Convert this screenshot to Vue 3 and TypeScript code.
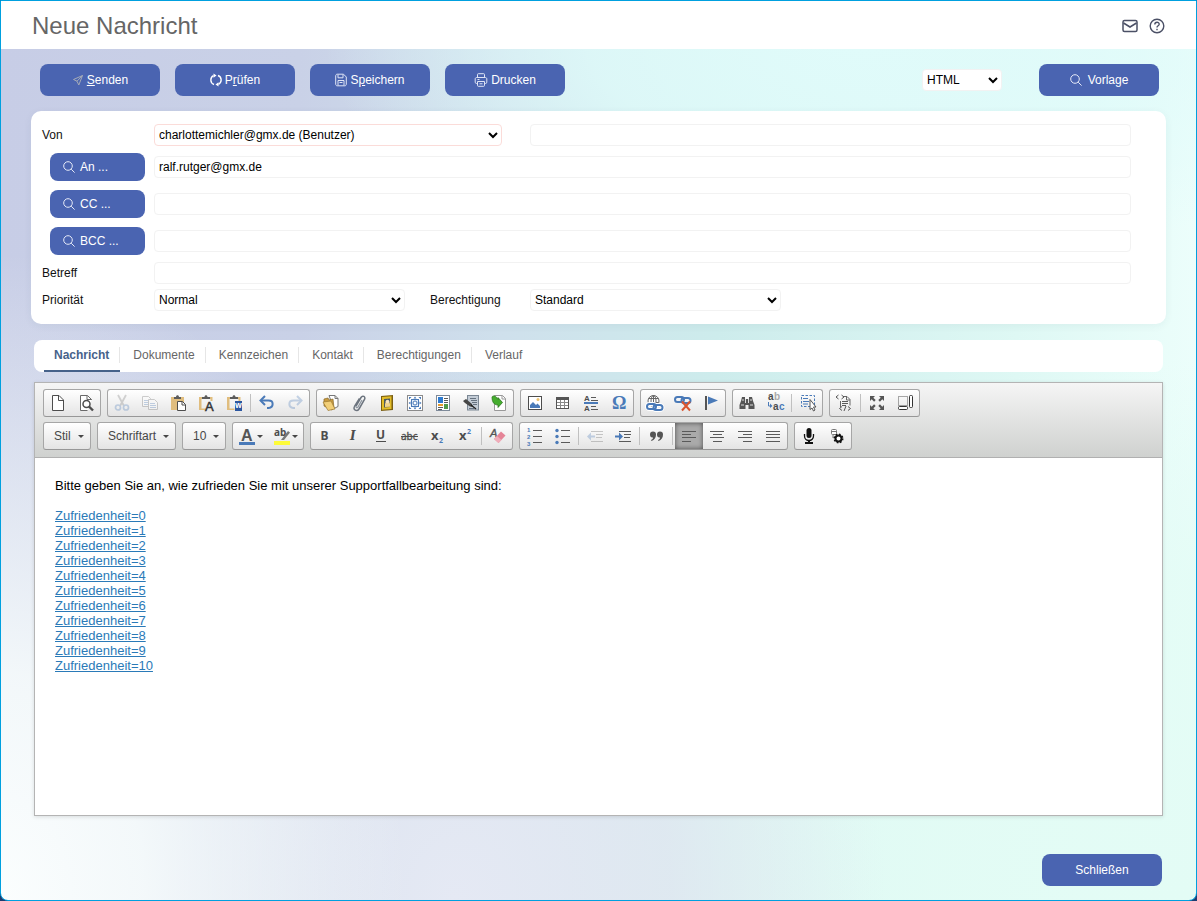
<script setup lang="ts">
import { ref } from 'vue'

interface Tool {
  name: string
  art: string
  off?: boolean
  on?: boolean
}
type Item = Tool | '|'

const g = '#4d4d4d'
const b = '#4a7ab8'
const lines = (rows: number[][], color = '#5a5a5a') =>
  rows.map(([x, y, w]) => `<rect x="${x}" y="${y}" width="${w}" height="1" fill="${color}"/>`).join('')
const letter = (t: string, x: number, y: number, size: number, color = g, extra = '') =>
  `<text x="${x}" y="${y}" font-size="${size}" fill="${color}" font-family="'Noto Sans','Open Sans',sans-serif" font-weight="700" ${extra}>${t}</text>`
const small = (t: string, x: number, y: number, size: number, color = g) =>
  `<text x="${x}" y="${y}" font-size="${size}" fill="${color}" font-family="'Liberation Sans',Arial,sans-serif" font-weight="700">${t}</text>`
const board = `<path d="M1 2h2.500v11.500h5v1.500h-7.500zM12.500 2h2v4h-2z" fill="#e0bd7e"/><path d="M1 2h13v2h-13z" fill="#e0bd7e"/><path d="M4 4v-2h2.500c0-2.500 3-2.500 3 0h2.500v2z" fill="#5c5c5c"/>`
const page = `<path d="M2.500.5h6.500l4.500 4.500v10.500h-11z" fill="#fff" stroke="${g}"/><path d="M8.500.5v5h5" fill="none" stroke="${g}"/>`
const chain = (c: string, y: number, w = 2) =>
  `<rect x="0" y="${y}" width="9" height="5" rx="2.500" fill="none" stroke="${c}" stroke-width="${w}"/><rect x="6.500" y="${y + 1}" width="9" height="5" rx="2.500" fill="none" stroke="${c}" stroke-width="${w}"/>`

const rowOne: Item[][] = [
  [
    { name: 'Neue Seite', art: page },
    { name: 'Vorschau', art: `<path d="M13.500 5v-.5l-4-4h-7v15h7" fill="#fff" stroke="#6a6a6a"/><path d="M9 .5v4h4.500" fill="none" stroke="#6a6a6a"/><circle cx="8.500" cy="9" r="3.500" fill="#fff" stroke="${g}" stroke-width="1.500"/><path d="M11 11.500l4 4" stroke="${g}" stroke-width="2.400"/>` },
  ],
  [
    { name: 'Ausschneiden', off: true, art: `<path d="M4 0l6 11M12 0l-6 11" stroke="#777" stroke-width="1.800"/><circle cx="4" cy="12.500" r="2.500" fill="none" stroke="${b}" stroke-width="1.700"/><circle cx="12" cy="12.500" r="2.500" fill="none" stroke="${b}" stroke-width="1.700"/>` },
    { name: 'Kopieren', off: true, art: `<path d="M.5 1.500h6l2 2v8h-8z" fill="#fff" stroke="#666"/>${lines([[2, 5, 5], [2, 7, 5], [2, 9, 4]], b)}<path d="M6.500 4.500h6l3 3v7h-9z" fill="#fff" stroke="#666"/>${lines([[8, 8, 5], [8, 10, 6], [8, 12, 6]], b)}` },
    { name: 'Einfügen', art: `<path d="M1 2h13v13h-13z" fill="#e0bd7e"/><path d="M4 4v-2h2c0-2.500 3-2.500 3 0h2v2z" fill="#5c5c5c"/><path d="M7.500 6.500h5l3 3v6h-8z" fill="#fff" stroke="${g}"/><path d="M12 6.500v3.500h3.500" fill="none" stroke="${g}"/>` },
    { name: 'Als Text einfügen', art: `${board}<text x="7" y="16" font-size="13" fill="#333" font-family="'Liberation Sans',sans-serif" stroke="#333" stroke-width=".5">A</text>` },
    { name: 'Aus Word einfügen', art: `${board}<rect x="9" y="6" width="7" height="10" fill="#2c57a0"/>${letter('w', 9, 13, 8, '#fff')}` },
    '|',
    { name: 'Rückgängig', art: `<path d="M2 5.500h7.500c5.500 0 5.500 6.500 0 7.500h-1.500" fill="none" stroke="${b}" stroke-width="2"/><path d="M6 1l-4.500 4.500 4.500 4.500" fill="none" stroke="${b}" stroke-width="2"/>` },
    { name: 'Wiederherstellen', off: true, art: `<path d="M14 5.500h-7.500c-5.500 0-5.500 6.500 0 7.500h1.500" fill="none" stroke="${b}" stroke-width="2"/><path d="M10 1l4.500 4.500-4.500 4.500" fill="none" stroke="${b}" stroke-width="2"/>` },
  ],
  [
    { name: 'Ordner', art: `<path d="M6 .5h6l3 3v8l-4 2z" fill="#fff" stroke="#777"/><path d="M12 .5v3h3" fill="none" stroke="#777"/><path d="M1 4l4-1 1 2 4-1 1 9-2 2-8-4z" fill="#c99b3f" stroke="#8a6a2a" stroke-width=".7"/><path d="M0 7l8-1 4 8-7 1.500z" fill="#f2cf78" stroke="#9c7a32" stroke-width=".7"/>` },
    { name: 'Anhang', art: `<path d="M5 11l5-8.500c1.500-2.500 5-1 3.500 2l-5.500 9.500c-2 3-6.500 1-4.500-2.500l5-8" fill="none" stroke="#6c747e" stroke-width="1.500"/><path d="M5 11c-.5 2 1.500 2 2 1l4-7" fill="none" stroke="#8d96a0" stroke-width="1.300"/>` },
    { name: 'Bild', art: `<path d="M2 1l12-1v15l-12 1z" fill="#7b5f12"/><path d="M3 2l9.500-.7v12.700l-9.500.8z" fill="#e3bd28"/><path d="M5 4l6-.4v8.400l-6 .5z" fill="#4d5a60"/><path d="M6 12v-3l1-3h3l1 3v2.700z" fill="#f1d48c"/><circle cx="8.500" cy="6.500" r="1.800" fill="#f5e3bd"/>` },
    { name: 'Rahmen', art: `<rect x=".5" y=".5" width="15" height="15" fill="#fff" stroke="#8b8b8b"/><rect x="4.500" y="4.500" width="7" height="7" fill="#dfeaf7" stroke="${b}"/><path d="M8 1.500l1.500 2h-3zM8 14.500l1.500-2h-3zM1.500 8l2-1.500v3zM14.500 8l-2-1.500v3zM2 2h2.500l-2.500 2.500zM14 2h-2.500l2.500 2.500zM2 14h2.500l-2.500-2.500zM14 14h-2.500l2.500-2.500z" fill="${b}"/><circle cx="8" cy="8" r="2" fill="#fff" stroke="${b}"/>` },
    { name: 'Vorlage einfügen', art: `<rect x="1.500" y=".5" width="13" height="15" fill="#fff" stroke="#7e8a99"/><rect x="3" y="2" width="5" height="6" fill="#2e7bd0"/><rect x="3" y="9" width="5" height="2" fill="#e49b2d"/><rect x="9" y="9" width="4" height="5" fill="#4f9a49"/>${lines([[9, 3, 4], [9, 5, 4], [9, 7, 4], [3, 12, 5], [3, 14, 4]])}` },
    { name: 'Signatur', art: `<rect x="4.500" y=".5" width="11" height="14.500" fill="#c3ccd6" stroke="#7b8794"/>${lines([[7, 3, 6], [8, 5, 6], [9, 7, 5], [10, 9, 4], [6, 13, 5]], '#66727f')}<path d="M0 6l3-2 6 5 1 3-3-.5-5-3.500z" fill="#464646"/><path d="M8 10l5 4" stroke="#222" stroke-width="1.500"/>` },
    { name: 'Importieren', art: `<path d="M3.500.5h8l3 3v12h-11z" fill="#fff" stroke="#999"/><path d="M11 .5v3.500h3.500" fill="none" stroke="#999"/><path d="M1 2c1-2 4-1 5 1l1 1.500v-2l4.500 5-4.500 5v-2.500c-4 0-6-3-6-8z" fill="#45ad2e" stroke="#236c16" stroke-width=".7"/>` },
  ],
  [
    { name: 'Grafik', art: `<rect x="1.500" y="1.500" width="13" height="13" fill="#fff" stroke="${g}"/><path d="M3 13v-3l3-3 3 3 1.500-1.500 2.500 2.500v2z" fill="${b}"/><circle cx="11" cy="4.500" r="1.500" fill="#ecc26e"/>` },
    { name: 'Tabelle', art: `<rect x="1.500" y="2.500" width="12" height="11" fill="#fff" stroke="#555"/><rect x="1" y="2" width="13" height="3" fill="#555"/><path d="M2 7.500h11M2 10.500h11M5.500 5v8M9.500 5v8" stroke="#888" fill="none"/>` },
    { name: 'Trennlinie', art: `${small('A', 1, 6, 8)}${small('A', 1, 16, 8)}<rect x="1" y="7" width="14" height="2" fill="${b}"/>${lines([[8, 2, 5], [8, 5, 7], [8, 11, 5], [8, 14, 7]])}` },
    { name: 'Sonderzeichen', art: `<text x="1" y="14" font-size="18" font-weight="700" fill="${b}" font-family="'Liberation Serif',serif">Ω</text>` },
  ],
  [
    { name: 'Link', art: `<circle cx="6.500" cy="6" r="5.500" fill="#fff" stroke="#666"/><ellipse cx="6.500" cy="6" rx="2.500" ry="5.500" fill="none" stroke="#666"/><path d="M1.500 3.500h10M1.500 7.500h10M6.500 1v8" stroke="#666" fill="none"/>${chain('#fff', 9, 4)}${chain(b, 9)}` },
    { name: 'Link entfernen', art: `${chain(b, 2)}<path d="M7 6.500l8 9M15 6.500l-8 9" stroke="#d9552f" stroke-width="2"/>` },
    { name: 'Anker', art: `<rect x="2" y="1" width="2" height="14" fill="#555"/><path d="M5 1.500l10 4-10 4z" fill="${b}"/>` },
  ],
  [
    { name: 'Suchen', art: `<path d="M3 2h3v2h4v-2h3l1 4 1.500 4v4h-6v-4h-3v4h-6v-4l1.500-4z" fill="#555"/><path d="M6.500 4v4M9.500 4v4M2 10h3M11 10h3M3 5h2M11 5h2" stroke="#ddd"/>` },
    { name: 'Ersetzen', art: `${small('a', 1, 5, 10)}${small('b', 7, 5, 10, '#aaa')}${small('a', 6, 15, 10)}${small('c', 12, 15, 10, b)}<path d="M1.500 7v4h2" fill="none" stroke="${b}"/><path d="M3 8.500l2.500 2.500-2.500 2z" fill="${b}"/>` },
    '|',
    { name: 'Alles auswählen', art: `<path d="M1.500.5h13v11h-13z" fill="none" stroke="${b}" stroke-dasharray="2.500 1.500"/><path d="M3 3.500h5M3 6.500h6M3 9h5" stroke="${b}"/><path d="M10 4.500v10l2-1.500 1.500 3 1.500-1-1.500-3h2.500z" fill="#fff" stroke="#555"/>` },
  ],
  [
    { name: 'Quellcode', art: `<path d="M7 1.500h4l3 3v6M4.500 6v6" fill="none" stroke="#666"/><path d="M10.500 1.500v3.500h3.500" fill="none" stroke="#666"/>${lines([[6, 6, 6], [6, 8, 6], [6, 10, 4]])}<path d="M2.500 0l-2.500 2 2.500 2M5.500 0l2.500 2-2.500 2M6 11.500l-2.500 2 2.500 2M12 11.500l2.500 2-2.500 2M10 11l-2 5" fill="none" stroke="#555"/>` },
    '|',
    { name: 'Maximieren', art: `<path d="M1 1h5l-1.700 1.700 2.400 2.400-1.600 1.600-2.400-2.400-1.700 1.700zM15 1v5l-1.700-1.700-2.400 2.400-1.600-1.600 2.400-2.400-1.700-1.700zM1 15v-5l1.700 1.700 2.400-2.400 1.600 1.600-2.400 2.400 1.700 1.700zM15 15h-5l1.700-1.700-2.400-2.400 1.600-1.600 2.400 2.400 1.700-1.700z" fill="#555"/>` },
    { name: 'Blöcke anzeigen', art: `<rect x="1.500" y="1.500" width="9" height="9" fill="none" stroke="#555" stroke-dasharray="1 1"/><rect x="12.500" y=".5" width="3" height="12" rx="1" fill="#fff" stroke="#333"/><rect x="1.500" y="11.500" width="9" height="3" rx="1" fill="#fff" stroke="#333"/>` },
  ],
]

const lists = lines([[7, 2, 9], [7, 8, 9], [7, 14, 9]])
const inkText: Item[] = [
  { name: 'Fett', art: letter('B', 3.5, 12, 12) },
  { name: 'Kursiv', art: `<text x="5" y="12" font-size="12" font-weight="700" font-style="italic" fill="${g}" font-family="'DejaVu Serif',serif">I</text>` },
  { name: 'Unterstrichen', art: `${letter('U', 3, 11, 12)}<rect x="3" y="13" width="10" height="1" fill="${g}"/>` },
  { name: 'Durchgestrichen', art: `<text x="0" y="12" font-size="10" fill="${g}" stroke="${g}" stroke-width=".3" font-family="'Noto Sans',sans-serif">abc</text><rect x="0" y="8" width="17" height="1" fill="${g}"/>` },
  { name: 'Tiefgestellt', art: `${letter('x', 2, 12, 13)}${letter('2', 10, 15, 7, b)}` },
  { name: 'Hochgestellt', art: `${letter('x', 2, 12, 13)}${letter('2', 10, 6, 7, b)}` },
  '|',
  { name: 'Formatierung entfernen', art: `<text x="0" y="9" font-size="11" font-style="italic" fill="#555" stroke="#555" stroke-width=".4" font-family="'Liberation Sans',sans-serif">A</text><path d="M4 11l7-7.500 4.500 4-7 7.500z" fill="#e58497"/><path d="M4 11l3-3 4.500 4-3 3z" fill="#f0adba"/>` },
]
const paragraph: Item[] = [
  { name: 'Nummerierung', art: `${small('1', 1, 4, 6, b)}${small('2', 1, 11, 6, b)}${small('3', 1, 18, 6, b)}${lists}` },
  { name: 'Aufzählung', art: `<circle cx="3" cy="2.500" r="1.700" fill="${b}"/><circle cx="3" cy="8.500" r="1.700" fill="${b}"/><circle cx="3" cy="14.500" r="1.700" fill="${b}"/>${lists}` },
  '|',
  { name: 'Einzug verkleinern', off: true, art: `<path d="M0 8.500l4-4v3h4v2h-4v3z" fill="${b}"/>${lines([[4, 3, 12], [9, 6, 7], [9, 9, 6], [4, 13, 12]])}` },
  { name: 'Einzug vergrößern', art: `<path d="M8 8.500l-4-4v3h-4v2h4v3z" fill="${b}"/>${lines([[4, 3, 12], [9, 6, 7], [9, 9, 6], [4, 13, 12]])}` },
  '|',
  { name: 'Zitatblock', art: `<path d="M2 6.500a3 3 0 0 1 6 0c0 3-1.500 5.500-4.500 6.500l-.5-1c1.500-.6 2-1.500 2-2.500-2 .4-3-1-3-3zM9 6.500a3 3 0 0 1 6 0c0 3-1.500 5.500-4.500 6.500l-.5-1c1.500-.6 2-1.500 2-2.500-2 .4-3-1-3-3z" fill="#555"/>` },
  '|',
  { name: 'Linksbündig', on: true, art: lines([[1, 3, 14], [1, 6, 9], [1, 9, 14], [1, 13, 9]]) },
  { name: 'Zentriert', art: lines([[1, 3, 14], [4, 6, 9], [1, 9, 14], [4, 13, 9]]) },
  { name: 'Rechtsbündig', art: lines([[1, 3, 14], [6, 6, 9], [1, 9, 14], [6, 13, 9]]) },
  { name: 'Blocksatz', art: lines([[1, 3, 14], [1, 6, 14], [1, 9, 14], [1, 13, 14]]) },
]
const extras: Item[] = [
  { name: 'Diktieren', art: `<rect x="5.500" y="0" width="5" height="10" rx="2.500" fill="#111"/><path d="M3.500 6v2a4.500 4.500 0 0 0 9 0v-2" fill="none" stroke="#111" stroke-width="1.300"/><path d="M7 12h2v2h3v2h-8v-2h3z" fill="#111"/>` },
  { name: 'Optionen', art: `<rect x="2.500" y="1.500" width="5" height="5" rx="1" fill="#fff" stroke="#777"/><path d="M3 3.500h4M4 7v3" stroke="#777"/><circle cx="9.500" cy="10.500" r="3" fill="#fff" stroke="#111" stroke-width="2"/><circle cx="9.500" cy="10.500" r="4.300" fill="none" stroke="#111" stroke-width="1.400" stroke-dasharray="1.700 1.677"/>` },
]
const combos = [
  { label: 'Stil', cls: 'w-stil' },
  { label: 'Schriftart', cls: 'w-font' },
  { label: '10', cls: 'w-size' },
]
const colors: Tool[] = [
  { name: 'Textfarbe', art: `<text x="2" y="13" font-size="16" font-weight="700" fill="#555" font-family="'Liberation Sans',sans-serif">A</text><rect x="0" y="14" width="16" height="3" fill="${b}"/>` },
  { name: 'Hintergrundfarbe', art: `${letter('ab', 0, 8, 10)}<path d="M7 12l7-9 2 1.500-6 7.500z" fill="#777"/><rect x="0" y="13" width="16" height="4" fill="#fdfb3a"/>` },
]

const tabs = ['Nachricht', 'Dokumente', 'Kennzeichen', 'Kontakt', 'Berechtigungen', 'Verlauf']
const active = ref('Nachricht')
const to = ref('ralf.rutger@gmx.de')
const recipients = [
  { id: 'to', label: 'An ...' },
  { id: 'cc', label: 'CC ...' },
  { id: 'bcc', label: 'BCC ...' },
]
const scores = Array.from({ length: 11 }, (_, i) => i)
</script>

<template>
  <div class="window">
    <header class="head">
      <h1>Neue Nachricht</h1>
      <button class="ghost" aria-label="E-Mail">
        <svg width="16" height="16" viewBox="0 0 16 16" fill="none" stroke="#4b5066" stroke-width="1.500"><rect x="1" y="2.500" width="14" height="11" rx="1.500" /><path d="M1.500 5l6.500 4 6.500-4" /></svg>
      </button>
      <button class="ghost" aria-label="Hilfe">
        <svg width="16" height="16" viewBox="0 0 16 16" fill="none" stroke="#4b5066" stroke-width="1.400"><circle cx="8" cy="8" r="6.800" /><path d="M5.800 6.500c0-3 4.500-2.800 4.400-.2 0 1.500-2.200 1.500-2.200 3.200M8 10.700v1.500" /></svg>
      </button>
    </header>

    <div class="actions">
      <button class="btn">
        <svg width="12" height="12" viewBox="0 0 12 12" fill="none" stroke="#a5abb8"><path d="M10.500 1.500l-9 4 3.500 1.700 1.800 3.800zM10.500 1.500l-5.500 5.700" /></svg>
        <span><u>S</u>enden</span>
      </button>
      <button class="btn">
        <svg width="12" height="14" viewBox="0 0 12 14" fill="none" stroke="#fff" stroke-width="1.400"><path d="M4 11.500a4.800 4.800 0 0 1-.5-8.800M8 2.500a4.800 4.800 0 0 1 .5 8.800" /><path d="M3.500 0.500l3 2-3 2.200zM8.500 13.500l-3-2 3-2.200z" fill="#fff" stroke="none" /></svg>
        <span>P<u>r</u>üfen</span>
      </button>
      <button class="btn">
        <svg width="12" height="14" viewBox="0 0 12 14" fill="none" stroke="#dfe4f5"><path d="M.7 3c0-1 .5-1.800 1.500-1.800h6.300l2.800 2.800v7c0 1-.5 1.800-1.500 1.800h-7.600c-1 0-1.500-.8-1.500-1.800zM3 1.500v3.300h5v-3.300M3 12.500v-5h6v5M4.500 9.500h3" /></svg>
        <span>S<u>p</u>eichern</span>
      </button>
      <button class="btn">
        <svg width="14" height="14" viewBox="0 0 14 14" fill="none" stroke="#dfe4f5"><path d="M3.500 4.500v-3c0-.5.3-.8.8-.8h5.400c.5 0 .8.300.8.800v3M3.500 10.500h-1c-.8 0-1.300-.5-1.300-1.300v-3.200c0-.8.5-1.500 1.500-1.500h8.600c1 0 1.500.7 1.500 1.500v3.200c0 .8-.5 1.300-1.300 1.300h-1M3.500 8.500h7v4c0 .5-.3.800-.8.800h-5.400c-.5 0-.8-.3-.8-.8zM3.500 6.500h2M5.500 10.800h3" /></svg>
        <span>Drucken</span>
      </button>
      <select class="format" aria-label="Format"><option>HTML</option></select>
      <button class="btn">
        <svg width="12" height="12" viewBox="0 0 12 12" fill="none" stroke="#e6eaf8"><circle cx="5" cy="5" r="4.300" /><path d="M8.200 8.200l3.400 3.400" /></svg>
        <span class="wide">Vorlage</span>
      </button>
    </div>

    <form class="card" @submit.prevent>
      <div class="row">
        <label for="from">Von</label>
        <select id="from" class="from"><option>charlottemichler@gmx.de (Benutzer)</option></select>
        <input class="grow" type="text" aria-label="Absendername" />
      </div>
      <div class="recipients">
        <div v-for="r in recipients" :key="r.id" class="row">
          <div class="pick">
            <button type="button" class="btn small">
              <svg width="12" height="12" viewBox="0 0 12 12" fill="none" stroke="#e6eaf8"><circle cx="5" cy="5" r="4.300" /><path d="M8.200 8.200l3.400 3.400" /></svg>
              <span>{{ r.label }}</span>
            </button>
          </div>
          <input v-if="r.id === 'to'" v-model="to" class="grow" type="text" :aria-label="r.label" />
          <input v-else class="grow" type="text" :aria-label="r.label" />
        </div>
      </div>
      <div class="row subject">
        <label for="subject">Betreff</label>
        <input id="subject" class="grow" type="text" />
      </div>
      <div class="row">
        <label for="prio">Priorität</label>
        <select id="prio" class="half"><option>Normal</option></select>
        <label for="perm" class="second">Berechtigung</label>
        <select id="perm" class="half"><option>Standard</option></select>
      </div>
    </form>

    <nav class="tabs">
      <button v-for="t in tabs" :key="t" :class="{ active: t === active }" @click="active = t"><span>{{ t }}</span></button>
    </nav>

    <section class="editor">
      <div class="bars">
        <div class="bar">
          <div v-for="(group, i) in rowOne" :key="i" class="group">
            <template v-for="(item, j) in group" :key="j">
              <i v-if="item === '|'" class="sep"></i>
              <button v-else class="tool" :class="{ off: item.off }" :aria-label="item.name"><svg width="16" height="16" viewBox="0 0 16 16" v-html="item.art"></svg></button>
            </template>
          </div>
        </div>
        <div class="bar">
          <button v-for="c in combos" :key="c.label" class="group combo" :class="c.cls"><span>{{ c.label }}</span><i class="caret"></i></button>
          <div class="group">
            <button v-for="c in colors" :key="c.name" class="tool color" :aria-label="c.name"><svg width="16" height="16" viewBox="0 0 16 16" v-html="c.art"></svg><i class="caret"></i></button>
          </div>
          <div v-for="(group, i) in [inkText, paragraph, extras]" :key="i" class="group">
            <template v-for="(item, j) in group" :key="j">
              <i v-if="item === '|'" class="sep"></i>
              <button v-else class="tool" :class="{ off: item.off, on: item.on }" :aria-label="item.name"><svg width="16" height="16" viewBox="0 0 16 16" v-html="item.art"></svg></button>
            </template>
          </div>
        </div>
      </div>
      <div class="body">
        <p>Bitte geben Sie an, wie zufrieden Sie mit unserer Supportfallbearbeitung sind:</p>
        <ul>
          <li v-for="n in scores" :key="n"><a href="#">Zufriedenheit={{ n }}</a></li>
        </ul>
      </div>
    </section>

    <footer class="foot">
      <button class="btn">Schließen</button>
    </footer>
  </div>
</template>

<style>
html {
  background: #1d3c70;
}
</style>

<style scoped>
.window,
.window * {
  box-sizing: border-box;
}
.window {
  min-height: 100vh;
  display: flex;
  flex-direction: column;
  border: 1px solid #00a0df;
  border-radius: 0 0 8px 8px;
  font: 12px/16px "Liberation Sans", Arial, sans-serif;
  color: #111;
  background:
    radial-gradient(ellipse 34% 72% at 0% 100%, #fbfefe 0%, #f7fcfce6 35%, #f3f9fb00 100%),
    radial-gradient(ellipse 36% 60% at 38% 100%, #e5e9f4 0%, #dfe5f0cc 50%, #dfe5f000 100%),
    radial-gradient(ellipse 70% 60% at 100% 100%, #e3fcf5 0%, #e3fcf5cc 60%, #e3fcf500 100%),
    radial-gradient(ellipse 45% 25% at 72% 5%, #e0fbfa 0%, #e0fbfacc 50%, #e0fbfa00 100%),
    linear-gradient(90deg, #c7cde6 0%, #c9d1e7 25%, #cfe0ec 42%, #cdecec 60%, #def8f4 85%, #ecfefb 100%);
}
button,
input,
select {
  font: inherit;
  color: inherit;
}
button {
  cursor: pointer;
}
.head {
  display: flex;
  align-items: center;
  gap: 11px;
  height: 48px;
  padding: 2px 31px 0;
  background: #fff;
}
h1 {
  margin: 0;
  flex: 1;
  font-size: 24px;
  line-height: 32px;
  font-weight: 400;
  color: #666;
}
.ghost {
  display: flex;
  padding: 0;
  border: 0;
  background: none;
}
.actions {
  display: flex;
  align-items: center;
  gap: 15px;
  padding: 15px 37px 15px 39px;
}
.btn {
  display: flex;
  align-items: center;
  justify-content: center;
  gap: 3px;
  width: 120px;
  height: 32px;
  padding: 0;
  border: 0;
  border-radius: 8px;
  background: #4a64b1;
  color: #fff;
}
.wide {
  margin-left: 3px;
}
.format {
  width: 80px;
  margin: 0 22px 0 auto;
}
.card {
  margin: 0 30px;
  padding: 13px 35px 13px 11px;
  border-radius: 10px;
  background: #fff;
  box-shadow: 0 2px 8px rgba(40, 60, 90, 0.06);
}
.row {
  display: flex;
  align-items: center;
}
.row label,
.pick {
  flex: none;
  width: 112px;
}
.row .second {
  width: 100px;
  margin-left: 26px;
}
input,
select {
  height: 22px;
  padding: 0 4px;
  border: 1px solid #f2f2f2;
  border-radius: 4px;
  background-color: #fff;
  color: #000;
}
select {
  padding: 0;
}
.grow {
  flex: 1;
  min-width: 0;
}
.from {
  width: 348px;
  margin-right: 28px;
  border-color: #fbdcd9;
}
.half {
  width: 251px;
}
.half + .second {
  margin-left: 25px;
}
.recipients {
  display: flex;
  flex-direction: column;
  gap: 9px;
  margin: 7px 0;
}
.pick {
  padding-left: 8px;
}
.small {
  width: 95px;
  height: 28px;
  justify-content: flex-start;
  gap: 5px;
  padding-left: 13px;
}
.subject {
  margin-bottom: 5px;
}
.tabs {
  display: flex;
  margin: 16px 33px 10px;
  padding: 0 10px;
  height: 32px;
  border-radius: 8px;
  background: #fff;
  color: #666;
}
.tabs button {
  display: flex;
  align-items: center;
  padding: 0;
  border: 0;
  border-bottom: 2px solid transparent;
  background: none;
}
.tabs span {
  padding: 0 10px 0 13px;
  border-right: 1px solid #e6e6e6;
}
.tabs button:last-child span {
  border: 0;
}
.tabs .active {
  border-color: #46628a;
  color: #46628a;
  font-weight: 700;
}
.tabs .active span {
  padding-left: 10px;
}
.editor {
  flex: 1;
  display: flex;
  flex-direction: column;
  margin: 0 33px;
  border: 1px solid #b4b4b4;
  background: #fff;
  box-shadow: 0 1px 4px rgba(0, 0, 0, 0.12);
}
.bars {
  display: flex;
  flex-direction: column;
  gap: 5px;
  padding: 6px 8px 7px;
  border-bottom: 1px solid #b0b0b0;
  background: linear-gradient(#f5f5f5, #cfd1cf);
}
.bar {
  display: flex;
  flex-wrap: wrap;
  gap: 6px;
}
.group {
  display: flex;
  align-items: center;
  height: 28px;
  padding: 0;
  border: 1px solid #a6a6a6;
  border-bottom-color: #979797;
  border-radius: 3px;
  background: linear-gradient(#fff, #e4e4e4);
}
.tool {
  display: flex;
  align-items: center;
  justify-content: center;
  width: 28px;
  height: 26px;
  padding: 0;
  border: 0;
  background: none;
}
.tool svg {
  display: block;
  overflow: visible;
}
.off svg {
  opacity: 0.3;
}
.on {
  background: #aaa;
  box-shadow: inset 0 0 5px rgba(0, 0, 0, 0.55);
}
.color {
  width: 35px;
  gap: 2px;
}
.sep {
  width: 1px;
  height: 18px;
  margin: 0 2px;
  background: #c0c0c0;
}
.caret {
  border: 3px solid transparent;
  border-top-color: #474747;
  border-bottom-width: 0;
}
.combo {
  justify-content: space-between;
  padding: 0 6px 0 10px;
  color: #474747;
}
.w-stil {
  width: 48px;
}
.w-font {
  width: 79px;
}
.w-size {
  width: 44px;
}
.body {
  padding: 20px;
  font-size: 13px;
  line-height: 15px;
  color: #000;
}
.body p {
  margin: 0 0 15px;
}
.body ul {
  margin: 0;
  padding: 0;
  list-style: none;
}
.body a {
  color: #2a7ab8;
}
.foot {
  display: flex;
  justify-content: flex-end;
  padding: 38px 34px 14px;
}
</style>
